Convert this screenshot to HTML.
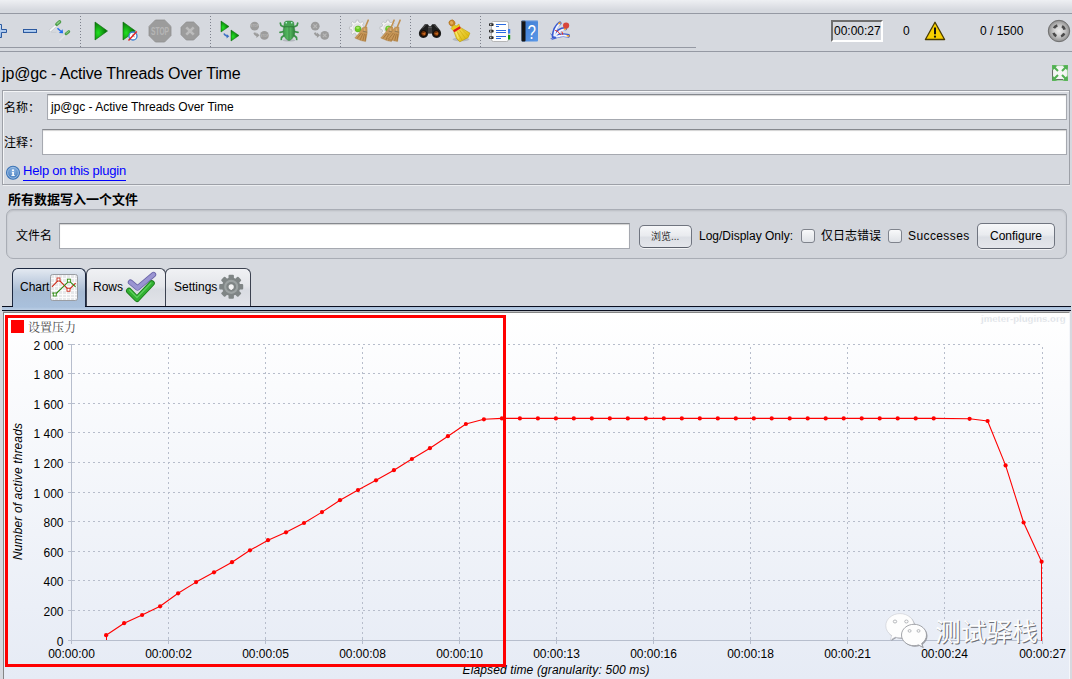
<!DOCTYPE html>
<html lang="zh">
<head>
<meta charset="utf-8">
<title>jp@gc - Active Threads Over Time</title>
<style>
html,body{margin:0;padding:0;}
body{width:1072px;height:679px;overflow:hidden;background:#d6d9df;position:relative;
 font-family:"Liberation Sans","Noto Sans CJK SC",sans-serif;font-size:12px;color:#000;}
.abs{position:absolute;}
.t{position:absolute;white-space:nowrap;line-height:14px;}
.cjk{font-family:"Liberation Sans","Noto Sans CJK SC",sans-serif;}
.tf{position:absolute;background:#fff;border:1px solid #a6a9b0;border-top-color:#85888e;box-sizing:border-box;
 box-shadow:inset 0 1px 1px rgba(0,0,0,.18);}
.btn{position:absolute;box-sizing:border-box;border:1px solid #6f747f;border-bottom-color:#5b606b;border-radius:5px;
 background:linear-gradient(#f6f7f9 0%,#e9ebef 45%,#dcdfe5 55%,#e4e6eb 100%);
 box-shadow:0 1px 0 rgba(255,255,255,.7);text-align:center;}
.cb{position:absolute;width:14px;height:14px;box-sizing:border-box;border:1px solid #7f838c;border-radius:3px;
 background:linear-gradient(#f8f9fa,#dfe2e7);}
.sep{position:absolute;top:16px;height:31px;width:1px;background:repeating-linear-gradient(#7d818c 0,#7d818c 1px,transparent 1px,transparent 3px);}
.ico{position:absolute;}
</style>
</head>
<body>
<!-- top gradient strip -->
<div class="abs" id="topgrad" style="left:0;top:0;width:1072px;height:13px;background:linear-gradient(#eef0f3 0,#e2e4e9 5px,#d6d9df 10px);"></div>
<div class="abs" style="left:0;top:13px;width:1072px;height:1px;background:#9599a3;"></div>
<div class="abs" style="left:0;top:47px;width:696px;height:1px;background:#9599a3;"></div>
<div class="abs" style="left:0;top:51px;width:1072px;height:1px;background:#9599a3;"></div>

<!-- toolbar -->
<div id="toolbar">
<div class="sep" style="left:80px"></div>
<div class="sep" style="left:210px"></div>
<div class="sep" style="left:340px"></div>
<div class="sep" style="left:410px"></div>
<div class="sep" style="left:480px"></div>
<svg class="abs" style="left:0;top:0" width="1072" height="90" viewBox="0 0 1072 90">
<defs>
<linearGradient id="gPlay" x1="0" y1="0" x2="1" y2="0"><stop offset="0" stop-color="#18c018"/><stop offset="0.45" stop-color="#10a010"/><stop offset="1" stop-color="#075a07"/></linearGradient>
<radialGradient id="gPlayR" cx="0.25" cy="0.6" r="0.6"><stop offset="0" stop-color="#22e022"/><stop offset="1" stop-color="#0a7a0a"/></radialGradient>
<linearGradient id="gBlueBar" x1="0" y1="0" x2="0" y2="1"><stop offset="0" stop-color="#cfe1f7"/><stop offset="1" stop-color="#8fb5e6"/></linearGradient>
<radialGradient id="gRound" cx="0.5" cy="0.5" r="0.5"><stop offset="0" stop-color="#ececec"/><stop offset="0.45" stop-color="#d0d0d0"/><stop offset="0.8" stop-color="#a8a8a8"/><stop offset="1" stop-color="#8c8c8c"/></radialGradient>
<linearGradient id="gBook" x1="0" y1="0" x2="1" y2="1"><stop offset="0" stop-color="#3a78d0"/><stop offset="1" stop-color="#5a98e8"/></linearGradient>
<linearGradient id="gBroomY" x1="0" y1="0" x2="1" y2="1"><stop offset="0" stop-color="#f7e060"/><stop offset="1" stop-color="#d8b400"/></linearGradient>
<linearGradient id="gBug" x1="0" y1="0" x2="1" y2="0"><stop offset="0" stop-color="#3f9a4a"/><stop offset="0.5" stop-color="#5cbf66"/><stop offset="1" stop-color="#2f7f3a"/></linearGradient>
</defs>
<!-- plus (cut off) -->
<path d="M-8 29.5H-2.500V24.500H1.500V29.500H6.500V32.500H1.500V37.500H-2.500V32.500H-8Z" fill="url(#gBlueBar)" stroke="#2c5aa0" stroke-width="1"/>
<!-- minus -->
<rect x="23.5" y="29.5" width="13" height="3" fill="url(#gBlueBar)" stroke="#2c5aa0" stroke-width="1"/>
<!-- pipettes -->
<g stroke-linecap="round">
<line x1="50.300" y1="30.600" x2="56.500" y2="25" stroke="#c2c5cb" stroke-width="2.800"/>
<line x1="50.300" y1="30.600" x2="56.500" y2="25" stroke="#f6f7f8" stroke-width="1.700"/>
<line x1="56.800" y1="24.300" x2="59.600" y2="21.900" stroke="#4f9e4c" stroke-width="3.400"/>
<line x1="57.200" y1="23.700" x2="59.400" y2="21.800" stroke="#8ed088" stroke-width="1.300"/>
<line x1="59.800" y1="40.200" x2="64.800" y2="35.300" stroke="#e4e6e9" stroke-width="1.300"/>
<line x1="66" y1="33.800" x2="68.800" y2="31.600" stroke="#4f9e4c" stroke-width="2.800"/>
<line x1="66.400" y1="33.200" x2="68.500" y2="31.600" stroke="#8ed088" stroke-width="1"/>
<line x1="51.500" y1="32.300" x2="56" y2="32.300" stroke="#c4c7cd" stroke-width="0.600"/>
</g>
<path d="M57.500 28.300L60.800 31.200" stroke="#1f6ef0" stroke-width="1.500" fill="none"/>
<path d="M63.100 33.300L58.900 33L62.600 29.200Z" fill="#1f6ef0"/>
<!-- play -->
<path d="M95 22L107.5 31L95 40Z" fill="url(#gPlayR)" stroke="#0a6a0a" stroke-width="0.6"/>
<!-- play no timers -->
<path d="M123 22L135.5 31L123 40Z" fill="url(#gPlayR)" stroke="#0a6a0a" stroke-width="0.6"/>
<circle cx="133" cy="36" r="4" fill="#fff" stroke="#3b7fd0" stroke-width="1.3"/>
<path d="M133 36V33.6M133 36L134.8 37" stroke="#888" stroke-width="0.7" fill="none"/>
<line x1="128.5" y1="40.5" x2="136.8" y2="31.6" stroke="#e32222" stroke-width="1.4"/>
<!-- stop -->
<path d="M155.4 20H164.6L171 26.4V35.6L164.6 42H155.4L149 35.6V26.4Z" fill="#9c9c9c" stroke="#909090" stroke-width="0.8"/>
<text x="151" y="35" font-family="Liberation Sans, sans-serif" font-weight="bold" font-size="10.800" fill="#b6b6b6" textLength="18" lengthAdjust="spacingAndGlyphs">STOP</text>
<!-- shutdown X -->
<path d="M186.3 22H193.7L199 27.3V34.7L193.7 40H186.3L181 34.7V27.3Z" fill="#9c9c9c" stroke="#909090" stroke-width="0.8"/>
<path d="M186.3 27.3L193.7 34.7M193.7 27.3L186.3 34.7" stroke="#bcbcbc" stroke-width="2.6" fill="none"/>
<!-- remote start -->
<path d="M221 21L229 26.5L221 32Z" fill="url(#gPlayR)" stroke="#0a6a0a" stroke-width="0.5"/>
<path d="M231 30L239 35.5L231 41Z" fill="url(#gPlayR)" stroke="#0a6a0a" stroke-width="0.5"/>
<path d="M224 33.5C225 35.6 226.3 36.2 228 36.2" stroke="#3b6fc4" stroke-width="1.6" fill="none"/>
<path d="M229.3 36.2L226.6 38.4V34Z" fill="#3b6fc4"/>
<!-- remote stop (disabled) -->
<circle cx="254.6" cy="26.2" r="4.4" fill="#9c9c9c"/><circle cx="264.4" cy="35.4" r="4.4" fill="#9c9c9c"/>
<text x="254.6" y="27.4" text-anchor="middle" font-family="Liberation Sans, sans-serif" font-weight="bold" font-size="3.2" fill="#b8b8b8">STOP</text>
<text x="264.4" y="36.6" text-anchor="middle" font-family="Liberation Sans, sans-serif" font-weight="bold" font-size="3.2" fill="#b8b8b8">STOP</text>
<path d="M254.300 32.600C255 34.600 256 35.200 257.300 35.200" stroke="#9c9c9c" stroke-width="2" fill="none"/><path d="M259.600 35.300L256.400 38V32.600Z" fill="#9c9c9c"/>
<!-- bug -->
<ellipse cx="289" cy="40.300" rx="6.500" ry="1.300" fill="#b4b8bf"/>
<g stroke="#3c9448" stroke-width="1.700" fill="none" stroke-linecap="round" stroke-linejoin="round">
<path d="M285 27.500L281 25.500L280.300 23M293 27.500L297 25.500L297.700 23"/>
<path d="M284 31.500L280 32.300M294 31.500L298 32.300"/>
<path d="M284.500 35L281.500 37.500L281.300 39.500M293.500 35L296.500 37.500L296.700 39.500"/>
</g>
<path d="M289 25C293 25 294.800 27.500 294.800 31C294.800 35.500 292.500 39.500 289 40.600C285.500 39.500 283.200 35.500 283.200 31C283.200 27.500 285 25 289 25Z" fill="url(#gBug)" stroke="#2f7f3a" stroke-width="0.600"/>
<path d="M284.300 23C284.300 21.500 285.500 21 289 21C292.500 21 293.700 21.500 293.700 23L294.300 26.600H283.700Z" fill="#46a352" stroke="#2f7f3a" stroke-width="0.500"/>
<line x1="289" y1="27" x2="289" y2="40" stroke="#2a7434" stroke-width="0.700"/>
<path d="M284 26.800H294" stroke="#2a7434" stroke-width="0.600"/>
<circle cx="286.300" cy="22.700" r="0.800" fill="#c8fff0"/><circle cx="291.700" cy="22.700" r="0.800" fill="#c8fff0"/>
<!-- remote shutdown (disabled) -->
<circle cx="315.2" cy="26.2" r="4.4" fill="#9c9c9c"/><circle cx="324.7" cy="35.4" r="4.4" fill="#9c9c9c"/>
<path d="M313.400 24.400L317 28M317 24.400L313.400 28M322.900 33.600L326.500 37.200M326.500 33.600L322.900 37.200" stroke="#b8b8b8" stroke-width="1.2"/>
<path d="M314.800 32.600C315.500 34.600 316.500 35.200 317.800 35.200" stroke="#9c9c9c" stroke-width="2" fill="none"/><path d="M320.100 35.300L316.900 38V32.600Z" fill="#9c9c9c"/>
<!--MORE_START--><!-- clear: gear + broom -->
<g transform="translate(357.4,28)">
<path d="M5.93 -1.42L7.92 -1.13L7.92 1.13L5.93 1.42L5.20 3.19L6.40 4.80L4.80 6.40L3.19 5.20L1.42 5.93L1.13 7.92L-1.13 7.92L-1.42 5.93L-3.19 5.20L-4.80 6.40L-6.40 4.80L-5.20 3.19L-5.93 1.42L-7.92 1.13L-7.92 -1.13L-5.93 -1.42L-5.20 -3.19L-6.40 -4.80L-4.80 -6.40L-3.19 -5.20L-1.42 -5.93L-1.13 -7.92L1.13 -7.92L1.42 -5.93L3.19 -5.20L4.80 -6.40L6.40 -4.80L5.20 -3.19Z" fill="#f3f3f3" stroke="#b9bbbf" stroke-width="0.8" stroke-linejoin="round"/>
<circle r="4.2" fill="#e6e6e6" stroke="#d2d2d2" stroke-width="0.6"/>
<circle cx="0.6" cy="0.9" r="3" fill="#6ccc22" stroke="#4aa010" stroke-width="0.5"/>
<ellipse cx="0.4" cy="-0.2" rx="1.7" ry="1.1" fill="#b4f070" opacity="0.8"/>
</g>
<g>
<line x1="368.2" y1="20.2" x2="365.2" y2="27.5" stroke="#c09050" stroke-width="1.6" stroke-linecap="round"/>
<path d="M362.6 27.6L367 27L367.2 33L365.6 41.6L361 40.6L354.8 38L359.2 33Z" fill="#c8985a" stroke="#a87838" stroke-width="0.4"/>
<path d="M362.8 31.2L367 32.2" stroke="#7a6a50" stroke-width="0.7"/>
<path d="M361.5 33L357 38.6M363 33.5L360 40M364.5 33.8L362.8 40.8M366 34L365.2 41" stroke="#8e5e22" stroke-width="0.55" fill="none"/>
<path d="M364.5 28.5L364.8 31" stroke="#e0b878" stroke-width="0.8"/>
</g>
<!-- clear all: gear + two brooms -->
<g transform="translate(387.9,28)">
<path d="M5.93 -1.42L7.92 -1.13L7.92 1.13L5.93 1.42L5.20 3.19L6.40 4.80L4.80 6.40L3.19 5.20L1.42 5.93L1.13 7.92L-1.13 7.92L-1.42 5.93L-3.19 5.20L-4.80 6.40L-6.40 4.80L-5.20 3.19L-5.93 1.42L-7.92 1.13L-7.92 -1.13L-5.93 -1.42L-5.20 -3.19L-6.40 -4.80L-4.80 -6.40L-3.19 -5.20L-1.42 -5.93L-1.13 -7.92L1.13 -7.92L1.42 -5.93L3.19 -5.20L4.80 -6.40L6.40 -4.80L5.20 -3.19Z" fill="#f3f3f3" stroke="#b9bbbf" stroke-width="0.8" stroke-linejoin="round"/>
<circle r="4.2" fill="#e6e6e6" stroke="#d2d2d2" stroke-width="0.6"/>
<circle cx="0.6" cy="0.9" r="3" fill="#6ccc22" stroke="#4aa010" stroke-width="0.5"/>
<ellipse cx="0.4" cy="-0.2" rx="1.7" ry="1.1" fill="#b4f070" opacity="0.8"/>
</g>
<g transform="translate(25.9,0)">
<line x1="368.2" y1="20.2" x2="365.2" y2="27.5" stroke="#c09050" stroke-width="1.6" stroke-linecap="round"/>
<path d="M362.6 27.6L367 27L367.2 33L365.6 41.6L361 40.6L354.8 38L359.2 33Z" fill="#c8985a" stroke="#a87838" stroke-width="0.4"/>
<path d="M362.8 31.2L367 32.2" stroke="#7a6a50" stroke-width="0.7"/>
<path d="M361.5 33L357 38.6M363 33.5L360 40M364.5 33.8L362.8 40.8M366 34L365.2 41" stroke="#8e5e22" stroke-width="0.55" fill="none"/>
<path d="M364.5 28.5L364.8 31" stroke="#e0b878" stroke-width="0.8"/>
</g>
<g transform="translate(31.9,0)">
<line x1="368.2" y1="20.2" x2="365.2" y2="27.5" stroke="#c09050" stroke-width="1.6" stroke-linecap="round"/>
<path d="M362.6 27.6L367 27L367.2 33L365.6 41.6L361 40.6L354.8 38L359.2 33Z" fill="#c8985a" stroke="#a87838" stroke-width="0.4"/>
<path d="M362.8 31.2L367 32.2" stroke="#7a6a50" stroke-width="0.7"/>
<path d="M361.5 33L357 38.6M363 33.5L360 40M364.5 33.8L362.8 40.8M366 34L365.2 41" stroke="#8e5e22" stroke-width="0.55" fill="none"/>
<path d="M364.5 28.5L364.8 31" stroke="#e0b878" stroke-width="0.8"/>
</g>
<!-- binoculars -->
<g>
<path d="M424.800 24.300H427.800L429.200 26.300H430.800L432.200 24.300H435.200L440.300 30.500C441.600 32.500 441.400 35.500 439.500 37C437.500 38.400 434.500 38.200 433 36.500C432.200 35.600 431.900 34.500 431.900 33.500H428.100C428.100 34.500 427.800 35.600 427 36.500C425.500 38.200 422.500 38.400 420.500 37C418.600 35.500 418.400 32.500 419.700 30.500Z" fill="#1e1e1e"/>
<rect x="428" y="26.500" width="4" height="6.500" fill="#3a3a3a"/>
<path d="M428.300 27.300H431.700" stroke="#666" stroke-width="1"/>
<path d="M422 28.500L425.300 25.200M438 28.500L434.700 25.200" stroke="#6a6a6a" stroke-width="1"/>
<circle cx="423.700" cy="33.500" r="3" fill="#6a3008" stroke="#000" stroke-width="0.800"/><circle cx="436.300" cy="33.500" r="3" fill="#6a3008" stroke="#000" stroke-width="0.800"/>
<path d="M421.700 33.800L425.500 32.200L425 35.300Z" fill="#c8661c"/><path d="M434.300 33.800L438.100 32.200L437.600 35.300Z" fill="#c8661c"/>
</g>
<!-- yellow broom -->
<g>
<ellipse cx="461" cy="39.300" rx="8.500" ry="2" fill="#b4b8c0"/>
<ellipse cx="452" cy="23" rx="3" ry="3.100" fill="#c8862a" stroke="#a86a18" stroke-width="0.500" transform="rotate(-30 452 23)"/>
<ellipse cx="451.700" cy="22.600" rx="1.500" ry="1.700" fill="#e2ac5a" transform="rotate(-30 452 23)"/>
<path d="M451 28.500L453.500 25.300L456.500 25.800L459 24L460 27.200L453.500 31Z" fill="#e8cc20" stroke="#b89400" stroke-width="0.400"/>
<path d="M453.800 31.300L460.400 27.400L469.900 33.100L468.100 37.600L459.800 41.800L456.500 38.500Z" fill="url(#gBroomY)" stroke="#b89800" stroke-width="0.600" stroke-linejoin="round"/>
<path d="M453 30.300L459.800 26.300L460.900 28.300L454.200 32.300Z" fill="#e01818"/>
<path d="M457 31.500L462 40M459.500 30L465.500 38.500M461.500 29L468.500 36" stroke="#c4a000" stroke-width="0.500" fill="none"/>
<path d="M456 32L458.500 38.500" stroke="#fff27a" stroke-width="0.800" fill="none"/>
</g>
<!-- list / function helper -->
<g>
<rect x="491.500" y="21.500" width="17" height="20" rx="2" fill="#fdfdfd" stroke="#a8a8a8" stroke-width="0.800"/>
<path d="M496 24.500H506M496 26.500H499M496 30.500H506M496 32.500H506M496 36.500H506M496 38.500H501" stroke="#2a6ae0" stroke-width="1"/>
<rect x="508" y="29" width="2.200" height="4.500" fill="#3a7ae8"/><rect x="508" y="35" width="2.200" height="4.500" fill="#109a10"/>
<g fill="#2a2a2a"><rect x="489" y="23.200" width="4.600" height="2.800" rx="0.800"/><rect x="489" y="29.700" width="4.600" height="2.800" rx="0.800"/><rect x="489" y="36.200" width="4.600" height="2.800" rx="0.800"/></g>
<g fill="#c8c8c8"><rect x="490" y="23.900" width="1.400" height="1.400"/><rect x="490" y="30.400" width="1.400" height="1.400"/><rect x="490" y="36.900" width="1.400" height="1.400"/></g>
</g>
<!-- help book -->
<g>
<rect x="521.500" y="20.500" width="16.500" height="21" rx="1" fill="url(#gBook)"/>
<rect x="521.500" y="20.500" width="4" height="21" rx="1" fill="#151515"/>
<path d="M522 20.800H538" stroke="#9ab8e0" stroke-width="0.800"/>
<text transform="translate(531.700,39) scale(0.720,1)" text-anchor="middle" font-family="Liberation Sans, sans-serif" font-size="21" fill="#ffffff">?</text>
</g>
<!-- feather logo -->
<g fill="none" stroke-linecap="round">
<path d="M553.500 36.500C553.800 31 556.500 25.500 559.800 23.200" stroke="#3a5ad0" stroke-width="3.600"/>
<path d="M554 36.500C556.500 31.500 561 28.800 565.300 28.800" stroke="#3a5ad0" stroke-width="3.600"/>
<path d="M554.500 37C559 35 564.500 34.800 568.300 35.800" stroke="#3a5ad0" stroke-width="3.600"/>
<path d="M554.300 35.500C554.800 30.800 557 26.500 559.500 24" stroke="#f2f5ff" stroke-width="2"/>
<path d="M555.500 35.500C558 32 561.500 29.800 564.800 29.500" stroke="#f2f5ff" stroke-width="2"/>
<path d="M556.500 36.700C560.500 35.400 564.500 35.200 567.600 36" stroke="#f2f5ff" stroke-width="2"/>
<path d="M555.500 30.500L558 31.500M558.500 32.500L560.500 34.500M562 32L562.800 34.500" stroke="#e03030" stroke-width="1"/>
<path d="M559 23.700L560 22.800M564.500 29L565.800 28.700M567.300 35.700L568.800 36" stroke="#f0a020" stroke-width="1.600"/>
<path d="M551 38.500L556 37.500M552.500 36L550.800 33.800M552 39.500L555 38.500" stroke="#3a5ad0" stroke-width="0.800"/>
</g>
<circle cx="566.100" cy="25.500" r="3.100" fill="#d8453a"/>
<!-- warning triangle -->
<path d="M935 22.300L944.600 39.500H925.400Z" fill="#f7cf00" stroke="#4a3c00" stroke-width="1.300" stroke-linejoin="round"/>
<path d="M935 27.500V34.200" stroke="#111" stroke-width="2" stroke-linecap="butt"/><circle cx="935" cy="36.700" r="1.100" fill="#111"/>
<!-- round expand/collapse -->
<circle cx="1059" cy="31" r="10.700" fill="url(#gRound)" stroke="#6f6f6f" stroke-width="1"/>
<circle cx="1059" cy="31" r="5.800" fill="none" stroke="#4a4a4a" stroke-width="2.600" stroke-dasharray="4.200 4.910" stroke-dashoffset="-2.500"/>
<!-- green fullscreen icon -->
<g>
<rect x="1052" y="65" width="16" height="16" fill="#62b862"/>
<path d="M1056 65.500H1064L1067.500 69V77L1064 80.500H1056L1052.500 77V69Z" fill="#eef0ee"/>
<rect x="1054.500" y="67.500" width="11" height="11" fill="#f6f7f6"/>
<path d="M1052.500 69.500V79.500H1063" stroke="#6a6a6a" stroke-width="1" fill="none"/>
<path d="M1052.500 65.500H1057.500L1052.500 70.500ZM1067.500 65.500V70.500L1062.500 65.500ZM1052.500 80.500V75.500L1057.500 80.500ZM1067.500 80.500H1062.500L1067.500 75.500Z" fill="#52b052"/>
<path d="M1054.500 67.500L1058 71M1065.500 67.500L1062 71M1054.500 78.500L1058 75M1065.500 78.500L1062 75" stroke="#52b052" stroke-width="2"/>
</g>
<!--MORE_END-->
</svg>

</div>

<!-- timer etc -->
<div class="abs" style="left:831px;top:20px;width:52px;height:22px;box-sizing:border-box;border-style:solid;border-color:#6e6e6e #ffffff #ffffff #6e6e6e;border-width:2px;"></div>
<div class="t" style="left:834px;top:24px;">00:00:27</div>
<div class="t" style="left:903px;top:24px;">0</div>
<div class="t" style="left:980px;top:24px;">0 / 1500</div>

<!-- title -->
<div class="t" style="left:2px;top:64px;font-size:16px;line-height:20px;letter-spacing:-0.16px;">jp@gc - Active Threads Over Time</div>

<!-- name / comment -->
<div class="abs" style="left:2px;top:90px;width:1068px;height:95px;box-sizing:border-box;border:1px solid #9da0a7;"></div>
<div class="abs" style="left:3px;top:91px;width:1067px;height:95px;box-sizing:border-box;border:1px solid #f4f5f7;border-right:none;border-bottom-color:#eceef1;clip-path:inset(0 0 0 0);"></div>
<div class="abs" style="left:2px;top:90px;width:1068px;height:95px;box-sizing:border-box;border:1px solid #9da0a7;border-top:none;border-left:none;"></div>
<div class="t cjk" style="left:4px;top:101px;">名称：</div>
<div class="tf" style="left:47px;top:94px;width:1020px;height:26px;"></div>
<div class="t" style="left:51px;top:100px;">jp@gc - Active Threads Over Time</div>
<div class="t cjk" style="left:4px;top:136px;">注释：</div>
<div class="tf" style="left:42px;top:129px;width:1025px;height:26px;"></div>
<div class="t" style="left:23px;top:163px;color:#0000ff;border-bottom:1px solid #0000ff;height:17px;line-height:16px;box-shadow:0 -1px 0 rgba(0,0,255,0.0);font-size:13px;letter-spacing:-0.21px;">Help on this plugin</div>


<div class="t cjk" style="left:8px;top:193px;font-weight:bold;font-size:13px;letter-spacing:0;">所有数据写入一个文件</div>
<div class="abs" id="grp" style="left:6px;top:209px;width:1061px;height:50px;box-sizing:border-box;border:1px solid #a9adb5;border-radius:7px;background:#d3d6dc;box-shadow:inset 0 1px 2px rgba(0,0,0,.12);"></div>
<div class="t cjk" style="left:16px;top:229px;">文件名</div>
<div class="tf" style="left:59px;top:223px;width:571px;height:26px;"></div>
<div class="btn" style="left:639px;top:225px;width:53px;height:23px;"><span class="t cjk" style="left:11px;top:4px;font-size:10px;color:#333;">浏览...</span></div>
<div class="t" style="left:699px;top:229px;">Log/Display Only:</div>
<div class="cb" style="left:801px;top:229px;"></div>
<div class="t cjk" style="left:821px;top:229px;">仅日志错误</div>
<div class="cb" style="left:888px;top:229px;"></div>
<div class="t" style="left:908px;top:229px;letter-spacing:0.4px;">Successes</div>
<div class="btn" style="left:977px;top:223px;width:78px;height:26px;"><span class="t" style="left:12px;top:5px;">Configure</span></div>

<!-- tabs -->
<div id="tabs">
<div class="abs" style="left:86px;top:268px;width:80px;height:39px;box-sizing:border-box;border:1px solid #3c4250;border-bottom:none;border-radius:6px 6px 0 0;background:linear-gradient(#f0f1f4,#e4e6ea 45%,#d9dce2 55%,#e2e4e9);"></div>
<div class="abs" style="left:165px;top:268px;width:86px;height:39px;box-sizing:border-box;border:1px solid #3c4250;border-bottom:none;border-radius:6px 6px 0 0;background:linear-gradient(#f0f1f4,#e4e6ea 45%,#d9dce2 55%,#e2e4e9);"></div>
<div class="abs" style="left:12px;top:268px;width:74px;height:39px;box-sizing:border-box;border:1px solid #1c2840;border-bottom:none;border-radius:6px 6px 0 0;background:linear-gradient(#e3e9f1 0%,#c1cee0 35%,#a7bbd3 60%,#a9c0dc 100%);"></div>
<div class="t" style="left:20px;top:280px;">Chart</div>
<div class="t" style="left:93px;top:280px;">Rows</div>
<div class="t" style="left:174px;top:280px;">Settings</div>
</div>
<div class="abs" style="left:2px;top:306px;width:11px;height:1px;background:#0a0e1e;"></div>
<div class="abs" style="left:85px;top:306px;width:986px;height:1px;background:#0a0e1e;"></div>
<div class="abs" style="left:2px;top:307px;width:1069px;height:3px;background:linear-gradient(#a9c0dc,#bdd0e6);"></div>
<div class="abs" style="left:2px;top:310px;width:1069px;height:1px;background:#0a0e1e;"></div>
<div class="abs" style="left:3px;top:311px;width:1067px;height:1px;background:#b9bbbf;"></div>
<!-- chart panel -->
<div class="abs" id="chart" style="left:3px;top:312px;width:1067px;height:367px;box-sizing:border-box;border:1px solid #858585;border-right-color:#f4f6fa;border-bottom:none;background:linear-gradient(#ffffff,#e6ebf5);"></div>
<svg class="abs" style="left:0;top:0" width="1072" height="679" viewBox="0 0 1072 679" font-family="Liberation Sans, sans-serif" font-size="12">
<path d="M78 344.5H1043M78 373.5H1043M78 403.5H1043M78 432.5H1043M78 462.5H1043M78 492.5H1043M78 521.5H1043M78 551.5H1043M78 580.5H1043M78 610.5H1043M168.5 347V640M265.5 347V640M362.5 347V640M459.5 347V640M556.5 347V640M653.5 347V640M750.5 347V640M847.5 347V640M944.5 347V640M1042.5 347V640" stroke="#b7bdcb" stroke-width="1" stroke-dasharray="2 3" fill="none" shape-rendering="crispEdges"/>
<path d="M71.5 344V644M68 640.5H1043M68 344.5H75M68 373.5H75M68 403.5H75M68 432.5H75M68 462.5H75M68 492.5H75M68 521.5H75M68 551.5H75M68 580.5H75M68 610.5H75M168.5 637V644M265.5 637V644M362.5 637V644M459.5 637V644M556.5 637V644M653.5 637V644M750.5 637V644M847.5 637V644M944.5 637V644M1042.5 637V644" stroke="#b7becd" stroke-width="1" fill="none" shape-rendering="crispEdges"/>
<text x="63.5" y="349.5" text-anchor="end">2 000</text>
<text x="63.5" y="378.5" text-anchor="end">1 800</text>
<text x="63.5" y="408.5" text-anchor="end">1 600</text>
<text x="63.5" y="437.5" text-anchor="end">1 400</text>
<text x="63.5" y="467.5" text-anchor="end">1 200</text>
<text x="63.5" y="497.5" text-anchor="end">1 000</text>
<text x="63.5" y="526.5" text-anchor="end">800</text>
<text x="63.5" y="556.5" text-anchor="end">600</text>
<text x="63.5" y="585.5" text-anchor="end">400</text>
<text x="63.5" y="615.5" text-anchor="end">200</text>
<text x="63.5" y="645.5" text-anchor="end">0</text>
<text x="71.5" y="658" text-anchor="middle">00:00:00</text>
<text x="168.5" y="658" text-anchor="middle">00:00:02</text>
<text x="265.5" y="658" text-anchor="middle">00:00:05</text>
<text x="362.5" y="658" text-anchor="middle">00:00:08</text>
<text x="459.5" y="658" text-anchor="middle">00:00:10</text>
<text x="556.5" y="658" text-anchor="middle">00:00:13</text>
<text x="653.5" y="658" text-anchor="middle">00:00:16</text>
<text x="750.5" y="658" text-anchor="middle">00:00:18</text>
<text x="847.5" y="658" text-anchor="middle">00:00:21</text>
<text x="944.5" y="658" text-anchor="middle">00:00:24</text>
<text x="1042.5" y="658" text-anchor="middle">00:00:27</text>
<text x="462.5" y="674" font-style="italic" textLength="187" lengthAdjust="spacing">Elapsed time (granularity: 500 ms)</text>
<text transform="translate(22,560) rotate(-90)" font-style="italic" textLength="137" lengthAdjust="spacing">Number of active threads</text>
<text x="981" y="321.7" font-size="9.5" font-weight="bold" fill="#d9dde4" stroke="#ffffff" stroke-width="0.25" font-family="Liberation Sans, sans-serif" textLength="84.5" lengthAdjust="spacing">jmeter-plugins.org</text>
<rect x="11" y="320" width="13" height="13" fill="#ff0000"/>
<text x="28" y="332" font-family="Liberation Serif, Noto Serif CJK SC, serif" font-size="12" fill="#484848">设置压力</text>
<path d="M106.1 635.2 L124.1 623.2 L142.1 615.0 L160.1 606.3 L178.1 593.3 L196.1 582.1 L214.0 572.3 L232.0 562.2 L250.0 550.3 L268.0 540.2 L286.0 532.3 L304.0 523.0 L322.0 512.1 L340.0 500.2 L358.0 490.1 L376.0 480.3 L393.9 470.2 L411.9 459.0 L429.9 448.2 L447.9 436.2 L465.9 424.0 L483.9 419.3 L501.9 418.4 L519.9 418.4 L537.9 418.4 L555.9 418.4 L573.8 418.4 L591.8 418.4 L609.8 418.4 L627.8 418.4 L645.8 418.4 L663.8 418.4 L681.8 418.4 L699.8 418.4 L717.8 418.4 L735.8 418.4 L753.8 418.4 L771.7 418.4 L789.7 418.4 L807.7 418.4 L825.7 418.4 L843.7 418.4 L861.7 418.4 L879.7 418.4 L897.7 418.4 L915.7 418.4 L933.7 418.4 L969.6 418.8 L987.6 421.0 L1005.6 465.4 L1023.6 522.5 L1041.6 561.7" stroke="#ff0000" stroke-width="1.1" fill="none" stroke-linejoin="round"/>
<path d="M106.5 635.2V640M1041.5 561.7V641" stroke="#ff0000" stroke-width="1" fill="none" shape-rendering="crispEdges"/>
<circle cx="106.1" cy="635.2" r="2.1" fill="#ff0000"/>
<circle cx="124.1" cy="623.2" r="2.1" fill="#ff0000"/>
<circle cx="142.1" cy="615.0" r="2.1" fill="#ff0000"/>
<circle cx="160.1" cy="606.3" r="2.1" fill="#ff0000"/>
<circle cx="178.1" cy="593.3" r="2.1" fill="#ff0000"/>
<circle cx="196.1" cy="582.1" r="2.1" fill="#ff0000"/>
<circle cx="214.0" cy="572.3" r="2.1" fill="#ff0000"/>
<circle cx="232.0" cy="562.2" r="2.1" fill="#ff0000"/>
<circle cx="250.0" cy="550.3" r="2.1" fill="#ff0000"/>
<circle cx="268.0" cy="540.2" r="2.1" fill="#ff0000"/>
<circle cx="286.0" cy="532.3" r="2.1" fill="#ff0000"/>
<circle cx="304.0" cy="523.0" r="2.1" fill="#ff0000"/>
<circle cx="322.0" cy="512.1" r="2.1" fill="#ff0000"/>
<circle cx="340.0" cy="500.2" r="2.1" fill="#ff0000"/>
<circle cx="358.0" cy="490.1" r="2.1" fill="#ff0000"/>
<circle cx="376.0" cy="480.3" r="2.1" fill="#ff0000"/>
<circle cx="393.9" cy="470.2" r="2.1" fill="#ff0000"/>
<circle cx="411.9" cy="459.0" r="2.1" fill="#ff0000"/>
<circle cx="429.9" cy="448.2" r="2.1" fill="#ff0000"/>
<circle cx="447.9" cy="436.2" r="2.1" fill="#ff0000"/>
<circle cx="465.9" cy="424.0" r="2.1" fill="#ff0000"/>
<circle cx="483.9" cy="419.3" r="2.1" fill="#ff0000"/>
<circle cx="501.9" cy="418.4" r="2.1" fill="#ff0000"/>
<circle cx="519.9" cy="418.4" r="2.1" fill="#ff0000"/>
<circle cx="537.9" cy="418.4" r="2.1" fill="#ff0000"/>
<circle cx="555.9" cy="418.4" r="2.1" fill="#ff0000"/>
<circle cx="573.8" cy="418.4" r="2.1" fill="#ff0000"/>
<circle cx="591.8" cy="418.4" r="2.1" fill="#ff0000"/>
<circle cx="609.8" cy="418.4" r="2.1" fill="#ff0000"/>
<circle cx="627.8" cy="418.4" r="2.1" fill="#ff0000"/>
<circle cx="645.8" cy="418.4" r="2.1" fill="#ff0000"/>
<circle cx="663.8" cy="418.4" r="2.1" fill="#ff0000"/>
<circle cx="681.8" cy="418.4" r="2.1" fill="#ff0000"/>
<circle cx="699.8" cy="418.4" r="2.1" fill="#ff0000"/>
<circle cx="717.8" cy="418.4" r="2.1" fill="#ff0000"/>
<circle cx="735.8" cy="418.4" r="2.1" fill="#ff0000"/>
<circle cx="753.8" cy="418.4" r="2.1" fill="#ff0000"/>
<circle cx="771.7" cy="418.4" r="2.1" fill="#ff0000"/>
<circle cx="789.7" cy="418.4" r="2.1" fill="#ff0000"/>
<circle cx="807.7" cy="418.4" r="2.1" fill="#ff0000"/>
<circle cx="825.7" cy="418.4" r="2.1" fill="#ff0000"/>
<circle cx="843.7" cy="418.4" r="2.1" fill="#ff0000"/>
<circle cx="861.7" cy="418.4" r="2.1" fill="#ff0000"/>
<circle cx="879.7" cy="418.4" r="2.1" fill="#ff0000"/>
<circle cx="897.7" cy="418.4" r="2.1" fill="#ff0000"/>
<circle cx="915.7" cy="418.4" r="2.1" fill="#ff0000"/>
<circle cx="933.7" cy="418.4" r="2.1" fill="#ff0000"/>
<circle cx="969.6" cy="418.8" r="2.1" fill="#ff0000"/>
<circle cx="987.6" cy="421.0" r="2.1" fill="#ff0000"/>
<circle cx="1005.6" cy="465.4" r="2.1" fill="#ff0000"/>
<circle cx="1023.6" cy="522.5" r="2.1" fill="#ff0000"/>
<circle cx="1041.6" cy="561.7" r="2.1" fill="#ff0000"/>
<rect x="6.5" y="316.5" width="498" height="349" fill="none" stroke="#ff0000" stroke-width="3"/>
</svg>
<svg class="abs" style="left:0;top:0" width="1072" height="679" viewBox="0 0 1072 679">
<defs>
<radialGradient id="gInfo" cx="0.5" cy="0.35" r="0.65"><stop offset="0" stop-color="#8db6e4"/><stop offset="1" stop-color="#3c74b8"/></radialGradient>
<linearGradient id="gChk" x1="0" y1="0" x2="0" y2="1"><stop offset="0" stop-color="#4cc84c"/><stop offset="1" stop-color="#1f8a1f"/></linearGradient>
</defs>
<!-- info icon -->
<circle cx="13" cy="172.800" r="6.500" fill="url(#gInfo)" stroke="#3f76b8" stroke-width="1.100"/>
<circle cx="13" cy="172.800" r="5.400" fill="none" stroke="#a8c8e8" stroke-width="0.800"/>
<circle cx="13" cy="170.300" r="1.050" fill="#fff"/>
<path d="M11.900 171.900H13.900V175.200H14.900V176.100H11.300V175.200H12.300V172.700H11.900Z" fill="#fff"/>
<!-- chart tab icon -->
<rect x="50.500" y="274.500" width="27" height="26" rx="2" fill="#e6e8ea" stroke="#9a9da3" stroke-width="1"/>
<path d="M54.500 275V300M58.500 275V300M62.500 275V300M66.500 275V300M70.500 275V300M74.500 275V300M51 278.500H77M51 282.500H77M51 286.500H77M51 290.500H77M51 294.500H77M51 297.500H77" stroke="#fbfbfc" stroke-width="1"/>
<path d="M51.900 286.900L58.750 279.750L68.750 290L75.600 283.100" stroke="#cc2a1a" stroke-width="1.100" fill="none"/>
<path d="M52.500 292.750L55 294.750L69.100 280.900L75.600 286.900" stroke="#2e8a10" stroke-width="1.100" fill="none"/>
<rect x="57" y="278" width="3" height="3" fill="#fff" stroke="#cc2a1a" stroke-width="0.900"/>
<rect x="67" y="288.250" width="3" height="3" fill="#fff" stroke="#cc2a1a" stroke-width="0.900"/>
<rect x="53.250" y="293" width="3" height="3" fill="#fff" stroke="#2e8a10" stroke-width="0.900"/>
<rect x="67.350" y="279.150" width="3" height="3" fill="#fff" stroke="#2e8a10" stroke-width="0.900"/>
<!-- rows tab icon: checks -->
<g fill="none" stroke-linecap="round" stroke-linejoin="round">
<path d="M130.500 282.200L137.500 288L153.500 274.600" stroke="#6a64a8" stroke-width="5.400"/>
<path d="M130.500 282.200L137.500 288L153.500 274.600" stroke="#9a94d2" stroke-width="3.800"/>
<path d="M129 290.800L137 299L151.800 283.300" stroke="#1a7a1a" stroke-width="6"/>
<path d="M129 290.800L137 299L151.800 283.300" stroke="#32b032" stroke-width="4.400"/>
<path d="M129.500 290L137 297.500L151 283" stroke="#5fd05f" stroke-width="1.200"/>
</g>
<!-- settings gear -->
<g transform="translate(231.200,286.800)">
<g fill="#7f8585">
<rect x="-2.700" y="-12" width="5.400" height="24" rx="1"/>
<rect x="-2.700" y="-12" width="5.400" height="24" rx="1" transform="rotate(45)"/>
<rect x="-2.700" y="-12" width="5.400" height="24" rx="1" transform="rotate(90)"/>
<rect x="-2.700" y="-12" width="5.400" height="24" rx="1" transform="rotate(135)"/>
<circle r="9.200"/>
</g>
<circle r="6" fill="none" stroke="#9ca2a2" stroke-width="2.200"/>
<circle r="2.600" fill="#f4f4f4"/>
<path d="M0 0.500V3.200" stroke="#f4f4f4" stroke-width="1.400"/>
</g>
<!-- wechat watermark -->
<g>
<g transform="translate(1,1)" fill="#8e9096" opacity="0.850">
<path d="M900 613.600C907.800 613.600 914.200 619 914.200 625.700C914.200 632.400 907.800 637.800 900 637.800C898.300 637.800 896.700 637.600 895.200 637.100L890.300 640L891.700 635.500C888.100 633.300 885.800 629.700 885.800 625.700C885.800 619 892.200 613.600 900 613.600Z"/>
<path d="M914 624.300C920.900 624.300 926.500 629.100 926.500 635C926.500 638.400 924.600 641.400 921.700 643.400L922.800 647.300L918.600 644.900C917.200 645.400 915.600 645.700 914 645.700C907.100 645.700 901.500 640.900 901.500 635C901.500 629.100 907.100 624.300 914 624.300Z"/>
</g>
<path d="M900 613.600C907.800 613.600 914.200 619 914.200 625.700C914.200 632.400 907.800 637.800 900 637.800C898.300 637.800 896.700 637.600 895.200 637.100L890.300 640L891.700 635.500C888.100 633.300 885.800 629.700 885.800 625.700C885.800 619 892.200 613.600 900 613.600Z" fill="#fdfdfd" stroke="#c8cad0" stroke-width="0.600"/>
<ellipse cx="895" cy="621.500" rx="1.700" ry="1.500" fill="#fdfdfd" stroke="#9a9ca2" stroke-width="0.700"/><ellipse cx="906.400" cy="621.500" rx="1.700" ry="1.500" fill="#fdfdfd" stroke="#9a9ca2" stroke-width="0.700"/>
<path d="M914 624.300C920.900 624.300 926.500 629.100 926.500 635C926.500 638.400 924.600 641.400 921.700 643.400L922.800 647.300L918.600 644.900C917.200 645.400 915.600 645.700 914 645.700C907.100 645.700 901.500 640.900 901.500 635C901.500 629.100 907.100 624.300 914 624.300Z" fill="#fdfdfd" stroke="#9a9ca2" stroke-width="0.900"/>
<ellipse cx="909.600" cy="630.900" rx="1.500" ry="1.300" fill="#fdfdfd" stroke="#9a9ca2" stroke-width="0.700"/><ellipse cx="918.500" cy="630.900" rx="1.500" ry="1.300" fill="#fdfdfd" stroke="#9a9ca2" stroke-width="0.700"/>
</g>
</svg>
<div class="t" style="left:935.3px;top:617px;font-size:25.4px;line-height:30px;letter-spacing:0.3px;color:#fdfdfd;text-shadow:1px 1px 0 #6e7076;">测试驿栈</div>

</body>
</html>
